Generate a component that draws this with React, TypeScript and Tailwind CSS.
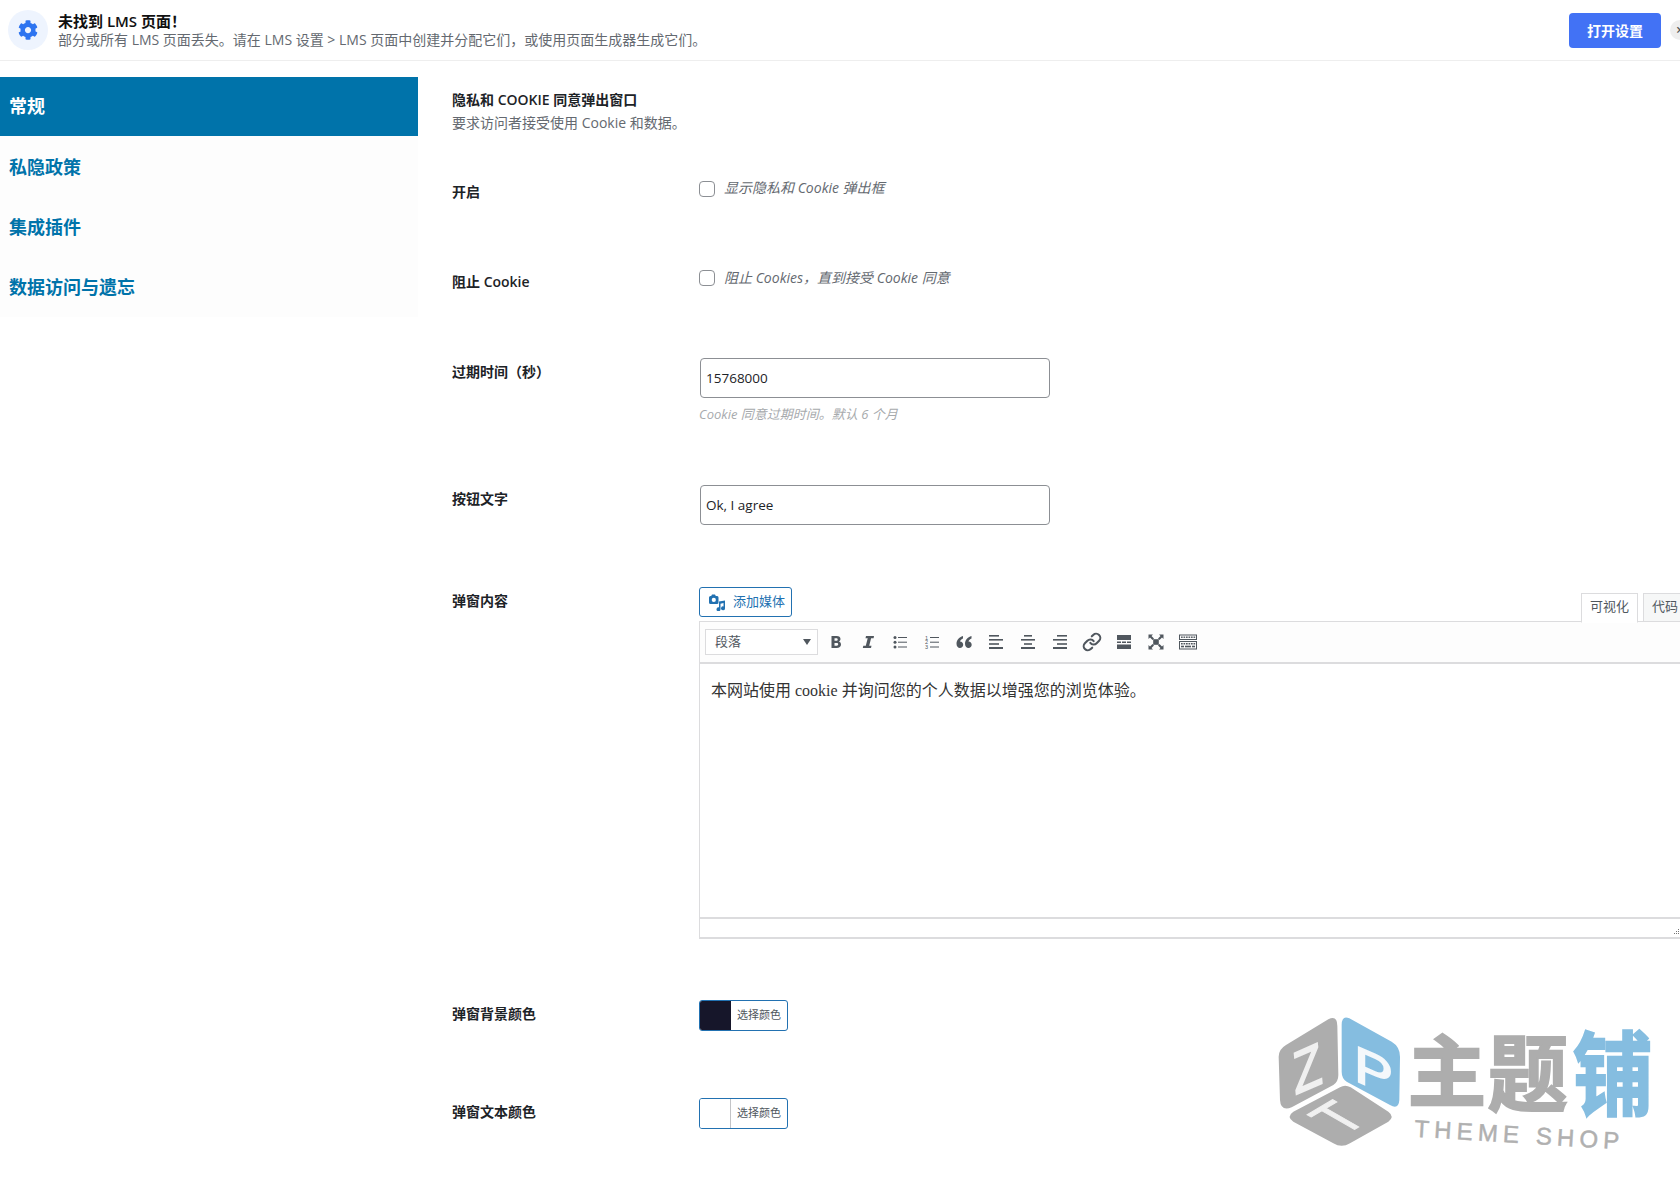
import { Link } from "lucide-react";
import { FaCog } from "react-icons/fa";

const sans = "font-['Open_Sans','Noto_Sans_CJK_SC',sans-serif]";

function MediaIcon() {
  return (
    <svg viewBox="0 0 16 17" className="w-4 h-[17px] fill-[#2271b1] shrink-0">
      <path fillRule="evenodd" d="M3 0.500h3l.8 1.500h1A1.500 1.500 0 0 1 9.500 3.500v5A1.500 1.500 0 0 1 8 10H1.500A1.500 1.500 0 0 1 0 8.500v-5A1.500 1.500 0 0 1 1.500 2h.7zM4.800 3.800a2.100 2.100 0 1 0 0 4.200 2.100 2.100 0 0 0 0-4.200z" />
      <path d="M16 6.500v7.800a2 2 0 1 1-1.500-1.900V9l-3 .8v5.400a2 2 0 1 1-1.500-1.900v-3.400l0-2.400z" />
    </svg>
  );
}

function BoldIcon() {
  return (
    <svg viewBox="0 0 20 20" className="w-5 h-5 fill-[#50575e]">
      <path fillRule="evenodd" d="M5.500 4h5.200c2.400 0 3.800 1.200 3.800 3 0 1.200-.7 2.100-1.700 2.600 1.400.4 2.200 1.500 2.200 2.900 0 2.200-1.700 3.500-4.300 3.500H5.500zM8.500 6.300v2.500h1.900c.9 0 1.300-.5 1.300-1.300s-.5-1.200-1.300-1.200zM8.500 11v2.700h2.200c1 0 1.500-.5 1.500-1.400s-.6-1.300-1.500-1.300z" />
    </svg>
  );
}

function ItalicIcon() {
  return (
    <svg viewBox="0 0 20 20" className="w-5 h-5 fill-[#50575e]">
      <path d="M8 4h8l-.4 2.200h-2.500L11.200 13.800h2.300L13 16H4.800l.5-2.200h2.500L9.700 6.200H7.500z" />
    </svg>
  );
}

function ListIcon({ numbered }: { numbered?: boolean }) {
  return (
    <svg viewBox="0 0 20 20" className="w-5 h-5 fill-[#50575e]">
      {numbered ? (
        <>
          <text x="3" y="7.500" fontSize="5.500" fontFamily="'Liberation Sans',sans-serif">1</text>
          <text x="3" y="12.300" fontSize="5.500" fontFamily="'Liberation Sans',sans-serif">2</text>
          <text x="3" y="17" fontSize="5.500" fontFamily="'Liberation Sans',sans-serif">3</text>
        </>
      ) : (
        <>
          <circle cx="5" cy="5.500" r="1.500" />
          <circle cx="5" cy="10.200" r="1.500" />
          <circle cx="5" cy="15" r="1.500" />
        </>
      )}
      <rect x="8" y="5" width="9" height="1" />
      <rect x="8" y="9.700" width="9" height="1" />
      <rect x="8" y="14.500" width="9" height="1" />
    </svg>
  );
}

function QuoteIcon() {
  return (
    <svg viewBox="0 0 20 20" className="w-5 h-5 fill-[#50575e]">
      <path d="M9 4C5 5.300 2.500 8 2.500 11.800 2.500 14.500 4 16 5.900 16S9.200 14.600 9.200 12.700 7.900 9.500 6 9.500C6.400 8.300 7.600 7.200 9 6.600zM17.500 4C13.500 5.300 11 8 11 11.800c0 2.700 1.500 4.200 3.400 4.200s3.300-1.400 3.300-3.300-1.300-3.200-3.200-3.200c.4-1.200 1.600-2.300 3-2.900z" />
    </svg>
  );
}

function AlignIcon({ kind }: { kind: "left" | "center" | "right" }) {
  const short = kind === "left" ? 3 : kind === "center" ? 6 : 7;
  const shortW = kind === "center" ? 8 : 10;
  return (
    <svg viewBox="0 0 20 20" className="w-5 h-5 fill-[#50575e]">
      <rect x={short} y="3" width={shortW} height="1.600" />
      <rect x="3" y="7" width="14" height="1.600" />
      <rect x={short} y="11.200" width={shortW} height="1.600" />
      <rect x="3" y="15" width="14" height="2" />
    </svg>
  );
}

function MoreIcon() {
  return (
    <svg viewBox="0 0 20 20" className="w-5 h-5 fill-[#50575e]">
      <rect x="3" y="3" width="14" height="5" />
      <rect x="3" y="9.500" width="4" height="1.500" />
      <rect x="8" y="9.500" width="4" height="1.500" />
      <rect x="13" y="9.500" width="4" height="1.500" />
      <rect x="3" y="12.500" width="14" height="4.500" />
    </svg>
  );
}

function FullscreenIcon() {
  return (
    <svg viewBox="0 0 20 20" className="w-5 h-5 fill-[#50575e]">
      <rect x="7.200" y="7.200" width="5.600" height="5.600" />
      <path d="M2.500 2.500H7L5.500 4 8 6.500 6.500 8 4 5.500 2.500 7zM17.500 2.500V7L16 5.500 13.500 8 12 6.500 14.500 4 13 2.500zM2.500 17.500V13L4 14.500 6.500 12 8 13.500 5.500 16 7 17.500zM17.500 17.500H13L14.500 16 12 13.500 13.500 12 16 14.500 17.500 13z" />
    </svg>
  );
}

function KeyboardIcon() {
  const keys = [3, 5.500, 8, 10.500, 13, 15.500];
  return (
    <svg viewBox="0 0 20 20" className="w-5 h-5 fill-[#50575e]">
      <path fillRule="evenodd" d="M1 2.500h18v5.500H1zM2 3.500v3.500h16V3.500z" />
      <path fillRule="evenodd" d="M1 9h18v8.500H1zM2 10v6.500h16V10z" />
      {keys.map((x) => (
        <rect key={x} x={x} y="4.500" width="1.700" height="1.400" />
      ))}
      {keys.map((x) => (
        <rect key={x} x={x} y="11" width="1.700" height="1.500" />
      ))}
      <rect x="3" y="13.700" width="3" height="1.600" />
      <rect x="7" y="13.700" width="6" height="1.600" />
      <rect x="14" y="13.700" width="3" height="1.600" />
    </svg>
  );
}

function Watermark() {
  return (
    <svg viewBox="0 0 1260 546" className="absolute left-[1260px] top-[1000px] w-[420px] h-[182px] pointer-events-none">
      <path d="M78 135 L205 58 Q232 45 232 78 L235 225 Q235 245 220 255 L95 322 Q62 335 60 300 L56 170 Q56 148 78 135Z" fill="#adadad" />
      <path d="M268 55 L395 125 Q420 140 420 170 L418 300 Q416 330 390 315 L260 245 Q245 235 245 215 L245 75 Q245 45 268 55Z" fill="#85bde0" />
      <path d="M240 262 Q255 252 272 262 L385 335 Q405 350 385 365 L270 430 Q245 445 220 430 L100 365 Q78 350 100 335Z" fill="#adadad" />
      <text x="0" y="0" fontSize="160" fill="#f0f0f0" stroke="#f0f0f0" strokeWidth="5" fontFamily="'Liberation Sans',sans-serif" transform="matrix(0.87 -0.38 0.1 1.1 105 285)">Z</text>
      <text x="0" y="0" fontSize="160" fill="#f4f8fb" stroke="#f4f8fb" strokeWidth="5" fontFamily="'Liberation Sans',sans-serif" transform="matrix(1.1 0.48 0 0.95 282 240)">P</text>
      <text x="0" y="0" fontSize="160" fill="#f0f0f0" stroke="#f0f0f0" strokeWidth="3" fontFamily="'Liberation Sans',sans-serif" transform="matrix(0.85 -0.5 1 0.57 248 409)">T</text>
      <text x="0" y="0" fontSize="235" fontWeight="700" fill="#adadad" stroke="#adadad" strokeWidth="6" fontFamily="'Noto Sans CJK SC',sans-serif" transform="matrix(1 0 0 1 443 302)">主</text>
      <text x="0" y="0" fontSize="240" fontWeight="700" fill="#adadad" stroke="#adadad" strokeWidth="6" fontFamily="'Noto Sans CJK SC',sans-serif" transform="matrix(1 0 0 1.05 683 315)">题</text>
      <text x="0" y="0" fontSize="240" fontWeight="700" fill="#85bde0" stroke="#85bde0" strokeWidth="6" fontFamily="'Noto Sans CJK SC',sans-serif" transform="matrix(1 0 0 1.14 938 325)">铺</text>
      <text x="462" y="410" fontSize="72" fill="#b0b0b0" stroke="#b0b0b0" strokeWidth="1.500" letterSpacing="15.500" fontFamily="'Liberation Sans',sans-serif" transform="rotate(3.500 462 410)">THEME SHOP</text>
    </svg>
  );
}

export default function App() {
  const tabs = ["私隐政策", "集成插件", "数据访问与遗忘"];
  return (
    <div className={`relative w-[1680px] h-[1182px] overflow-hidden bg-white text-[14px] text-[#1d2327] ${sans}`}>
      {/* notice bar */}
      <div className="h-[61px] flex items-center border-b border-[#eeeeee] pl-2">
        <div className="w-10 h-10 rounded-full bg-[#eef4fe] flex items-center justify-center shrink-0">
          <FaCog className="w-5 h-5 text-[#2d74f0]" />
        </div>
        <div className="ml-[10px]">
          <div className="text-[15px] leading-[19px] font-semibold text-[#111111]">未找到 LMS 页面！</div>
          <div className="text-[14px] leading-[18px] text-[#646970]">部分或所有 LMS 页面丢失。请在 LMS 设置 &gt; LMS 页面中创建并分配它们，或使用页面生成器生成它们。</div>
        </div>
        <button className="ml-auto w-[92px] h-[35px] rounded-[4px] bg-[#4272f5] text-white text-[14px] font-semibold shrink-0">打开设置</button>
        <div className="ml-[9px] -mr-[10px] w-5 h-5 rounded-full bg-[#eeeeee] shrink-0 flex items-center justify-center text-[#555555] text-[14px] leading-none font-semibold">×</div>
      </div>

      <div className="flex">
        {/* left tabs */}
        <div className="w-[418px] shrink-0 mt-4 bg-[#fdfdfd] h-[240px]">
          <div className="h-[59px] bg-[#0073aa] text-white text-[18px] font-bold pl-[9px] flex items-center">常规</div>
          <div className="flex flex-col pt-px">
            {tabs.map((t) => (
              <div key={t} className="h-[60px] flex items-center pl-[9px] text-[18px] font-bold text-[#0073aa]">{t}</div>
            ))}
          </div>
        </div>

        <div className="flex-1 min-w-0 pl-[34px]">
          <div className="mt-[29px] leading-5 font-semibold text-[14px]">隐私和 COOKIE 同意弹出窗口</div>
          <div className="mt-[3px] leading-5 text-[#646970] text-[14px]">要求访问者接受使用 Cookie 和数据。</div>

          <div className="mt-[45px] flex h-6">
            <div className="w-[247px] pt-1 leading-5 font-semibold">开启</div>
            <div className="flex items-start gap-[9px]">
              <input type="checkbox" className="appearance-none w-4 h-4 mt-[3px] border border-[#8c8f94] rounded-[4px] bg-white" />
              <span className="leading-5 italic text-[14px] text-[#646970]">显示隐私和 Cookie 弹出框</span>
            </div>
          </div>

          <div className="mt-[66px] flex h-6">
            <div className="w-[247px] pt-1 leading-5 font-semibold">阻止 Cookie</div>
            <div className="flex items-start gap-[9px]">
              <input type="checkbox" className="appearance-none w-4 h-4 mt-[2px] border border-[#8c8f94] rounded-[4px] bg-white" />
              <span className="leading-5 italic text-[14px] text-[#646970]">阻止 Cookies，直到接受 Cookie 同意</span>
            </div>
          </div>

          <div className="mt-[66px] flex">
            <div className="w-[247px] pt-1 leading-5 font-semibold">过期时间（秒）</div>
            <div>
              <input readOnly value="15768000" className="ml-px w-[350px] h-10 px-[5px] border border-[#8c8f94] rounded-[4px] text-[13.500px] outline-none" />
              <div className="mt-[6px] leading-5 italic text-[13px] text-[#a7aaad]">Cookie 同意过期时间。默认 6 个月</div>
            </div>
          </div>

          <div className="mt-[61px] flex">
            <div className="w-[247px] pt-1 leading-5 font-semibold">按钮文字</div>
            <input readOnly value="Ok, I agree" className="ml-px w-[350px] h-10 px-[5px] border border-[#8c8f94] rounded-[4px] text-[13.500px] outline-none" />
          </div>

          <div className="mt-[62px] flex">
            <div className="w-[247px] pt-1 leading-5 font-semibold shrink-0">弹窗内容</div>
            <div className="w-[1000px] shrink-0">
              <div className="h-[35px] flex justify-between items-start">
                <button className="h-[30px] w-[93px] border border-[#2271b1] rounded-[3px] flex items-center gap-[8px] pl-[9px] text-[13px] text-[#2271b1] bg-white">
                  <MediaIcon />
                  <span>添加媒体</span>
                </button>
                <div className="flex gap-[5px] mt-[6px] relative z-10">
                  <div className="w-[57px] h-[30px] pb-[2px] border border-[#dcdcde] border-b-white bg-white text-[13px] text-[#50575e] flex items-center justify-center">可视化</div>
                  <div className="w-[56px] h-[29px] pb-[2px] border border-[#dcdcde] bg-[#f6f7f7] text-[13px] text-[#50575e] flex items-center pl-[8px]">代码</div>
                </div>
              </div>
              <div className="border border-[#dcdcde] border-b-2 -mt-px">
                <div className="h-[42px] border-b-2 border-[#dcdcde] bg-[#fdfdfd] flex items-center pl-[5px]">
                  <div className="w-[113px] h-[26px] border border-[#dcdcde] bg-white flex items-center justify-between pl-[9px] pr-[6px] text-[13px] text-[#50575e]">
                    <span>段落</span>
                    <span className="w-0 h-0 border-x-[4px] border-x-transparent border-t-[6px] border-t-[#50575e]" />
                  </div>
                  <div className="flex items-center ml-[2px]">
                    <div className="w-8 flex justify-center"><BoldIcon /></div>
                    <div className="w-8 flex justify-center"><ItalicIcon /></div>
                    <div className="w-8 flex justify-center"><ListIcon /></div>
                    <div className="w-8 flex justify-center"><ListIcon numbered /></div>
                    <div className="w-8 flex justify-center"><QuoteIcon /></div>
                    <div className="w-8 flex justify-center"><AlignIcon kind="left" /></div>
                    <div className="w-8 flex justify-center"><AlignIcon kind="center" /></div>
                    <div className="w-8 flex justify-center"><AlignIcon kind="right" /></div>
                    <div className="w-8 flex justify-center"><Link className="w-5 h-5 text-[#50575e]" strokeWidth={2.500} /></div>
                    <div className="w-8 flex justify-center"><MoreIcon /></div>
                    <div className="w-8 flex justify-center"><FullscreenIcon /></div>
                    <div className="w-8 flex justify-center"><KeyboardIcon /></div>
                  </div>
                </div>
                <div className="h-[253px] pl-[11px] pt-[15px] text-[16px] leading-[24px] text-[#333333] font-['Liberation_Serif','Noto_Sans_CJK_SC',serif]">本网站使用 cookie 并询问您的个人数据以增强您的浏览体验。</div>
                <div className="h-[20px] border-t-2 border-[#dcdcde] pl-[973px] pt-[10px]">
                  <svg viewBox="0 0 7 7" className="w-[7px] h-[7px] fill-[#777777]">
                    <rect x="5" y="0" width="1" height="1" />
                    <rect x="3" y="2" width="1" height="1" />
                    <rect x="5" y="2" width="1" height="1" />
                    <rect x="1" y="4" width="1" height="1" />
                    <rect x="3" y="4" width="1" height="1" />
                    <rect x="5" y="4" width="1" height="1" />
                  </svg>
                </div>
              </div>
            </div>
          </div>

          <div className="mt-[61px] flex">
            <div className="w-[247px] pt-1 leading-5 font-semibold">弹窗背景颜色</div>
            <div className="w-[89px] h-[31px] border border-[#2271b1] rounded-[3px] overflow-hidden flex">
              <div className="w-[31px] bg-[#16162a]" />
              <div className="flex-1 flex items-center justify-center text-[11px] text-[#50575e]">选择颜色</div>
            </div>
          </div>

          <div className="mt-[67px] flex">
            <div className="w-[247px] pt-1 leading-5 font-semibold">弹窗文本颜色</div>
            <div className="w-[89px] h-[31px] border border-[#2271b1] rounded-[3px] overflow-hidden flex">
              <div className="w-[31px] bg-white border-r border-[#c3c4c7]" />
              <div className="flex-1 flex items-center justify-center text-[11px] text-[#50575e]">选择颜色</div>
            </div>
          </div>
        </div>
      </div>

      <Watermark />
    </div>
  );
}
